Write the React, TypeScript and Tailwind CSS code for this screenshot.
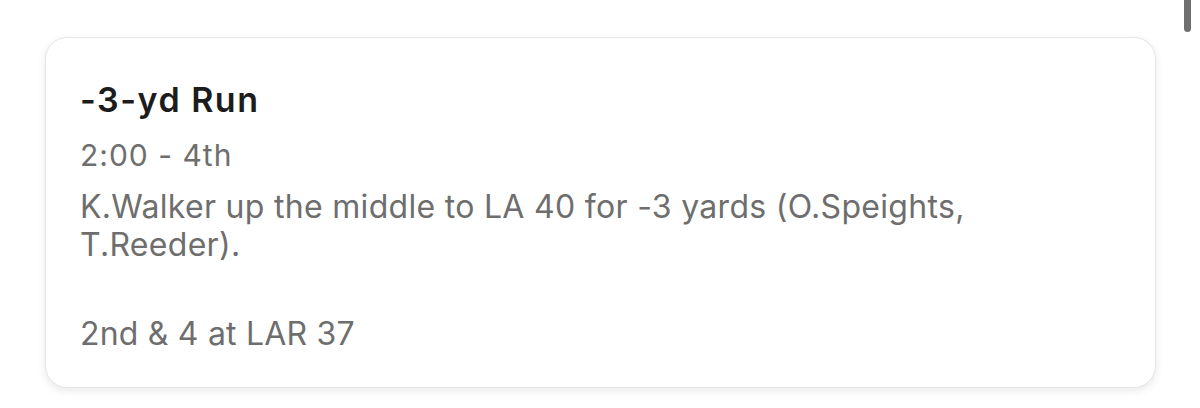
import React from 'react';

const play = {
  title: '-3-yd Run',
  clock: '2:00 - 4th',
  text: 'K.Walker up the middle to LA 40 for -3 yards (O.Speights, T.Reeder).',
  down: '2nd & 4 at LAR 37',
};

export default function App() {
  return (
    <div className="relative h-[408px] w-[1200px] overflow-hidden bg-white" style={{ fontFamily: 'Inter, "Liberation Sans", sans-serif' }}>
      {/* scrollbar thumb */}
      <div className="absolute right-[9px] top-0 h-[32px] w-[7px] rounded-b-full bg-[#6f6f6f]" />

      <div className="pl-[45px] pt-[37px] pr-[44px]">
        <div className="h-[351px] rounded-[22px] border border-[#e6e6e6] bg-white pl-[34px] pr-[40px] pt-[42px] shadow-[0_3px_8px_rgba(0,0,0,0.09)]">
          <div className="text-[34px] font-semibold leading-[40px] tracking-[1.5px] text-[#1c1c1c]">{play.title}</div>
          <div className="mt-[17px] text-[30px] leading-[36px] tracking-[1px] text-[#6e6e6e]">{play.clock}</div>
          <div className="mt-[15px] w-[900px] text-[32px] leading-[38px] tracking-[0.3px] text-[#6e6e6e]">{play.text}</div>
          <div className="mt-[51px] text-[32px] leading-[38px] tracking-[0.2px] text-[#6e6e6e]">{play.down}</div>
        </div>
      </div>
    </div>
  );
}
